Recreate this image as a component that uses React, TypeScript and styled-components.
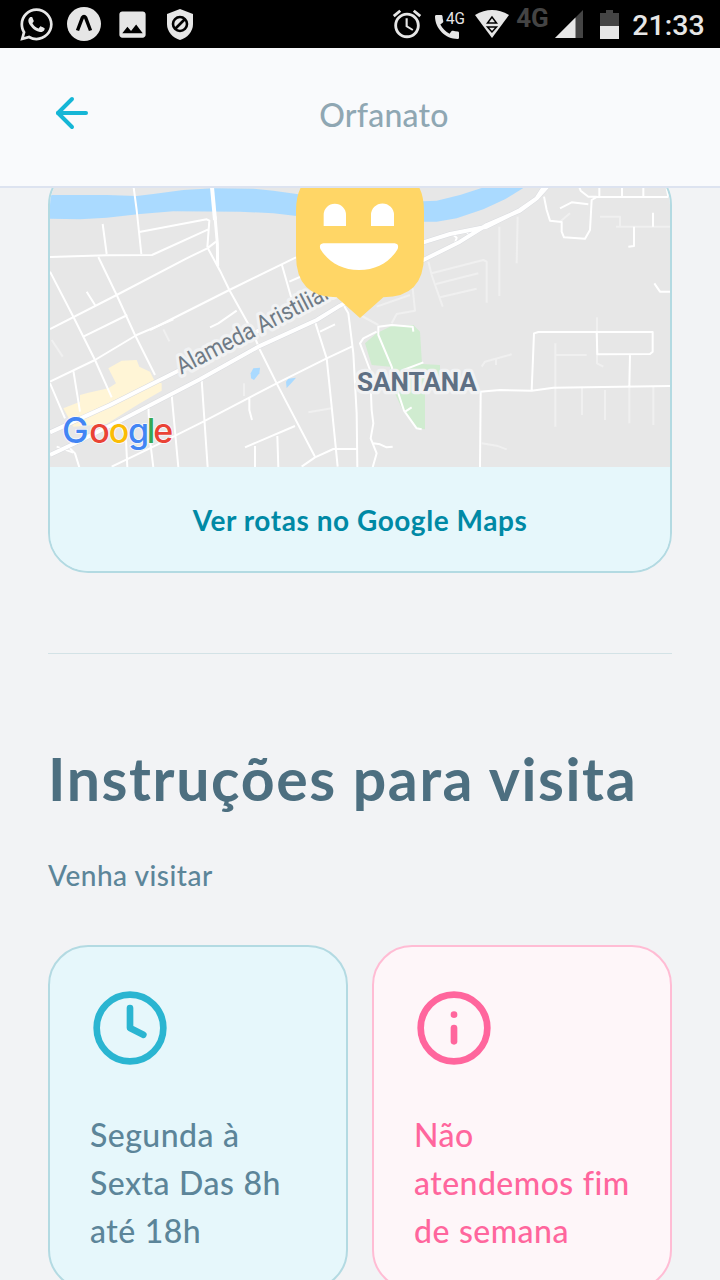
import React from 'react';
import styled, { createGlobalStyle } from 'styled-components';
import { ArrowLeft, Clock, Info } from 'lucide-react';
import { MdAlarm, MdCall, MdImage } from 'react-icons/md';
import { FaWhatsapp } from 'react-icons/fa';

const GlobalStyle = createGlobalStyle`
  * { box-sizing: border-box; }
  body { margin: 0; background: #f2f3f5; }
`;

const Screen = styled.div`
  display: flex;
  flex-direction: column;
  height: 1280px;
  overflow: hidden;
  background: #f2f3f5;
  font-family: Lato, 'Noto Sans', sans-serif;
`;

const StatusBar = styled.div`
  display: flex;
  flex: none;
  justify-content: space-between;
  height: 48px;
  padding: 0 16px 0 12px;
  background: #000;
  color: #e6e6e6;
`;

const StatusGroup = styled.div`
  display: flex;
  align-items: center;
`;

const NotificationSlot = styled.div`
  display: flex;
  justify-content: center;
  width: 48px;
`;

const StatusItem = styled.div<{ $w: number; $gap: number }>`
  display: flex;
  flex: none;
  justify-content: center;
  width: ${(p) => p.$w}px;
  margin-left: ${(p) => p.$gap}px;
`;

const AlarmIcon = styled(MdAlarm)`
  flex: none;
`;

const CallIcon = styled.div`
  position: relative;
  width: 30px;
  height: 32px;
  padding-top: 3px;
`;

const Handset = styled(MdCall)`
  margin-left: -4px;
`;

const CallBadge = styled.span`
  position: absolute;
  top: 1px;
  left: 11px;
  font: 400 17px/18px Roboto, sans-serif;
  transform: scaleX(0.9);
  transform-origin: left;
`;

const Network = styled.span`
  margin-top: -13px;
  color: #444;
  font: 700 26px/30px Roboto, sans-serif;
`;

const Time = styled.span`
  margin-top: 3px;
  font: 500 28.500px/34px Roboto, sans-serif;
`;

const Header = styled.header`
  display: flex;
  flex: none;
  align-items: center;
  height: 140px;
  padding: 0 48px 8px;
  border-bottom: 2px solid #dde3f0;
  background: #f9fafc;
`;

const BackButton = styled.button`
  display: flex;
  padding: 0;
  border: 0;
  background: none;
  color: #15b6d6;
`;

const HeaderTitle = styled.h1`
  flex: 1;
  margin: 4px 0 0;
  color: #8fa7b3;
  font-size: 32px;
  font-weight: 500;
  line-height: 44px;
  letter-spacing: 0.25px;
  text-align: center;
`;

const Content = styled.main`
  flex: 1;
  overflow: hidden;
  padding: 0 48px;
`;

const MapCard = styled.section`
  height: 408px;
  margin-top: -23px;
  overflow: hidden;
  border: 2px solid #b3dae2;
  border-radius: 40px;
  background: #e6f7fb;
`;

const MapView = styled.svg`
  display: block;
  width: 620px;
  height: 300px;
`;

const RoutesLink = styled.button`
  display: block;
  width: 100%;
  height: 104px;
  padding: 2px 0 0;
  border: 0;
  background: #e6f7fb;
  color: #0089a5;
  font-family: inherit;
  font-size: 28px;
  font-weight: 700;
  letter-spacing: 0.55px;
  text-align: center;
`;

const Divider = styled.hr`
  height: 1px;
  margin: 80px 0 93px;
  border: 0;
  background: #d3e2e6;
`;

const Title = styled.h2`
  margin: 0;
  color: #4d6f80;
  font-size: 59px;
  font-weight: 700;
  line-height: 64px;
  letter-spacing: 1.6px;
  white-space: nowrap;
`;

const Description = styled.p`
  margin: 44px 0 50px;
  color: #5c8599;
  font-size: 28px;
  font-weight: 500;
  line-height: 40px;
  letter-spacing: 0.5px;
`;

const Cards = styled.div`
  display: flex;
  gap: 24px;
`;

const InfoCard = styled.article<{ $tone: 'blue' | 'pink' }>`
  flex: 1;
  height: 345px;
  padding: 41px 0 0 40px;
  border: 2px solid ${(p) => (p.$tone === 'blue' ? '#b3dae2' : '#ffbcd4')};
  border-radius: 40px;
  background: ${(p) => (p.$tone === 'blue' ? '#e6f7fb' : '#fef6f9')};
  color: ${(p) => (p.$tone === 'blue' ? '#5c8599' : '#ff669d')};

  svg {
    display: block;
    color: ${(p) => (p.$tone === 'blue' ? '#2ab5d1' : '#ff669d')};
  }
`;

const CardText = styled.p`
  margin: 43px 0 0;
  font-size: 32px;
  font-weight: 500;
  line-height: 48px;
  letter-spacing: 0.45px;
  word-spacing: 0.6px;
  white-space: nowrap;
`;

const ExpoIcon = () => (
  <svg width="34" height="34" viewBox="0 0 34 34">
    <circle cx="17" cy="17" r="17" fill="#e6e6e6" />
    <path d="M10.500 23.500 15.300 10.800Q17 8.200 18.700 10.800L23.500 23.500" fill="none" stroke="#000" strokeWidth="3.400" />
  </svg>
);

const ShieldIcon = () => (
  <svg width="26" height="31" viewBox="0 0 26 31">
    <path d="M13 0 26 5V15C26 23 20 29 13 31 6 29 0 23 0 15V5Z" fill="#e6e6e6" />
    <g fill="none" stroke="#000" strokeWidth="2.600">
      <circle cx="13" cy="15" r="7" />
      <path d="m8 20 10-10" />
    </g>
  </svg>
);

const WifiIcon = () => (
  <svg width="34" height="28" viewBox="0 0 34 28">
    <path d="M0 5Q17-5 34 5L17 28Z" fill="#e6e6e6" />
    <path d="m17 7-4.500 6h9ZM17 22l-4.500-5h9Z" fill="#e6e6e6" stroke="#000" strokeWidth="1.500" />
  </svg>
);

const SignalIcon = () => (
  <svg width="28" height="28" viewBox="0 0 28 28">
    <path d="M28 0V28H0Z" fill="#444" />
    <path d="M20.500 7.500V28H0Z" fill="#e6e6e6" />
  </svg>
);

const BatteryIcon = () => (
  <svg width="19" height="29" viewBox="0 0 19 29">
    <path d="M6 0h7v3h6v13H0V3h6Z" fill="#444" />
    <path d="M0 16h19v13H0Z" fill="#e6e6e6" />
  </svg>
);

const StreetMap = () => (
  <MapView viewBox="30 -39 1860 900">
    <path fill="#e7e7e7" d="M30-39H1890V861H30Z" />
    <path
      fill="#aadaff"
      d="M30 45H200L290 48 340 42 430 30 520 25 640 26 700 32 770 42 960 70 1150 64 1190 62 1260 45 1325 24 1390-10H1500L1450 24 1395 58 1330 88 1250 115 1190 125H1150L960 122 770 108 700 100 600 95 400 94 300 102 200 113 120 118 30 116Z"
    />
    <path fill="#d0ecd0" d="M975 490 1010 460 1060 435H1120L1140 455 1146 552 1200 555V590H1155V748L1130 745 1088 690 1060 630 1050 560 995 555Z" />
    <path fill="#fff5d6" d="M205 565 245 542 290 540 298 560 330 575 345 605 365 610V632L300 670 200 732 100 740 70 685 120 665V645L145 638 205 625 228 610Z" />
    <g fill="#aadaff">
      <path d="M632 580 640 565 660 563 658 580 642 600 633 595Z" />
      <path d="M738 605 745 596 768 593 755 608 740 624Z" />
    </g>
    <g fill="none" stroke="#f0f0f0" strokeWidth="6" strokeLinejoin="round">
      <path d="M1378 140V348M1433 110 1430 250M1165 245 1175 285 1208 380M1175 280 1330 240 1340 245V368M1188 312 1315 280M1200 352 1310 326M1118 325 1125 392 1070 402 1055 430M960 405 1015 435M1680 110H1740V140H1890M1728 140H1780M1560 125 1590 100M1010 380 1110 345" />
      <path d="M1546 490V740M1546 525H1640M1671 412V550L1690 560M1626 620V705M1695 630V720M1768 620V730M1840 620V735M1325 560 1335 545 1415 523M1368 555V535M1325 790 1370 797 1400 808M612 610V648M805 697 875 685M35 480 68 530M370 448 388 484" />
    </g>
    <g fill="none" stroke="#fff" strokeWidth="6" strokeLinejoin="round">
      <path d="M278 0 290 90 304 222M188 132 200 222M30 231 200 226 336 225 505 148M298 156 500 118 508 122 502 202M30 447 230 345 440 235 502 205 528 185M502 202 540 272 568 330 635 450 660 510 710 610 825 830M175 231 230 345 285 465 345 585M330 450 568 330 768 232M30 275 100 410 165 540 215 652M140 335 165 375M130 470 262 405M725 252 760 375M748 305 800 282M510 442 535 430 590 392" />
      <path d="M30 605 165 540 290 465 400 418M100 572 120 695M30 610 75 715M85 800 105 820 118 862M240 722 258 780 262 862M325 680 330 780 340 862M395 645 415 862M485 600 503 862M215 860 340 800 490 725 710 610 860 535 935 500M628 655V690L636 720M615 802 765 738M645 798V862M712 768 715 862M825 425 860 535 875 680 893 860M905 365 925 400 940 520 950 700 952 862M840 455 885 433M785 860 825 832 880 807H952M50 800 100 818" />
      <path d="M1120 455 1118 440 1055 435 1015 440 1015 465 1055 560 1075 640 1092 692 1130 745 1145 748M1010 455 970 475 960 490 990 570 995 690 1000 730 992 775 1010 820 998 862M1000 790 1020 793 1040 802 1058 800M1090 570 1150 547M1092 697 1115 682M1320 862 1322 640 1320 635 1380 630 1475 632 1540 623 1890 618M1475 632 1482 460 1495 456H1838V515L1830 522 1672 523 1670 457M1770 522 1768 618" />
      <path d="M1512 50 1520 90 1530 122 1565 126V155L1572 172 1635 176 1650 150 1655 60 1670 51H1885M1885 50 1880 24M1610 0 1622 32 1645 50H1670M1678 50V0M1746 50V0M1810 50V0M1560 85 1595 67 1645 73M1839 98V140M1782 140V198L1765 200M1843 310 1860 335H1890M1235 160 1250 173 1245 190M1280 155 1290 170" />
    </g>
    <g fill="none" strokeLinejoin="round">
      <path stroke="#dadce0" strokeWidth="15" d="M30 825 100 792 240 722 480 598 655 500 830 420 900 377 1150 240 1260 185 1340 135 1440 92 1490 55 1525 0M30 757 120 716 210 675 400 580 600 480 900 330 1150 187 1230 162 1340 140 1440 90 1490 55 1540 0" />
      <path stroke="#fff" strokeWidth="12" d="M30 825 100 792 240 722 480 598 655 500 830 420 900 377 1150 240 1260 185 1340 135 1440 92 1490 55 1525 0M30 757 120 716 210 675 400 580 600 480 900 330 1150 187 1230 162 1340 140 1440 90 1490 55 1540 0" />
      <path stroke="#fff" strokeWidth="12" d="M514 0 525 120" />
      <path stroke="#fff" strokeWidth="9" d="M525 110 532 190 533 258" />
    </g>
    <g fontFamily="Roboto, sans-serif" stroke="#f1f2f3" strokeWidth="20" strokeLinejoin="round" paintOrder="stroke">
      <text transform="translate(424 584) rotate(-27.200)" fontSize="72" fill="#6f7a85" textLength="522" lengthAdjust="spacingAndGlyphs">
        Alameda Aristilian
      </text>
      <text x="951" y="632" fontSize="80" fontWeight="700" fill="#5f7084" textLength="360" lengthAdjust="spacingAndGlyphs">
        SANTANA
      </text>
    </g>
    <g fontFamily="Inter, sans-serif" fontSize="102" fontWeight="500" stroke="#f8fafc" strokeWidth="5" strokeLinejoin="round" paintOrder="stroke">
      <text y="790">
        <tspan x="66" fontSize="107" fill="#4285f4">G</tspan>
        <tspan x="148" fill="#ea4335">o</tspan>
        <tspan x="206" fill="#fbbc05">o</tspan>
        <tspan x="264" fill="#4285f4">g</tspan>
        <tspan x="320" fill="#34a853">l</tspan>
        <tspan x="340" fill="#ea4335">e</tspan>
      </text>
    </g>
    <path fill="#ffd666" d="M894-33H1026Q1152-33 1152 93V226Q1152 352 1030 352L960 414 890 352Q768 352 768 226V93Q768-33 894-33Z" />
    <path
      fill="#fff"
      d="M851 138V105A33.500 33.500 0 0 1 918 105V138ZM993 138V105A34.500 34.500 0 0 1 1062 105V138ZM850 190H1064Q1078 192 1073 207C1050 246 1010 270 957 270 905 270 865 246 841 207Q836 192 850 190Z"
    />
  </MapView>
);

export default function App() {
  return (
    <Screen>
      <GlobalStyle />
      <StatusBar>
        <StatusGroup>
          <NotificationSlot><FaWhatsapp size={37} /></NotificationSlot>
          <NotificationSlot><ExpoIcon /></NotificationSlot>
          <NotificationSlot><MdImage size={35} /></NotificationSlot>
          <NotificationSlot><ShieldIcon /></NotificationSlot>
        </StatusGroup>
        <StatusGroup>
          <StatusItem $w={28} $gap={0}><AlarmIcon size={34} /></StatusItem>
          <StatusItem $w={30} $gap={14}>
            <CallIcon>
              <Handset size={32} />
              <CallBadge>4G</CallBadge>
            </CallIcon>
          </StatusItem>
          <StatusItem $w={34} $gap={10}><WifiIcon /></StatusItem>
          <StatusItem $w={33} $gap={7}><Network>4G</Network></StatusItem>
          <StatusItem $w={28} $gap={6}><SignalIcon /></StatusItem>
          <StatusItem $w={19} $gap={17}><BatteryIcon /></StatusItem>
          <StatusItem $w={71} $gap={14}><Time>21:33</Time></StatusItem>
        </StatusGroup>
      </StatusBar>

      <Header>
        <BackButton aria-label="Voltar"><ArrowLeft size={48} /></BackButton>
        <HeaderTitle>Orfanato</HeaderTitle>
      </Header>

      <Content>
        <MapCard>
          <StreetMap />
          <RoutesLink>Ver rotas no Google Maps</RoutesLink>
        </MapCard>
        <Divider />
        <Title>Instruções para visita</Title>
        <Description>Venha visitar</Description>
        <Cards>
          <InfoCard $tone="blue">
            <Clock size={80} />
            <CardText>Segunda à<br />Sexta Das 8h<br />até 18h</CardText>
          </InfoCard>
          <InfoCard $tone="pink">
            <Info size={80} />
            <CardText>Não<br />atendemos fim<br />de semana</CardText>
          </InfoCard>
        </Cards>
      </Content>
    </Screen>
  );
}
